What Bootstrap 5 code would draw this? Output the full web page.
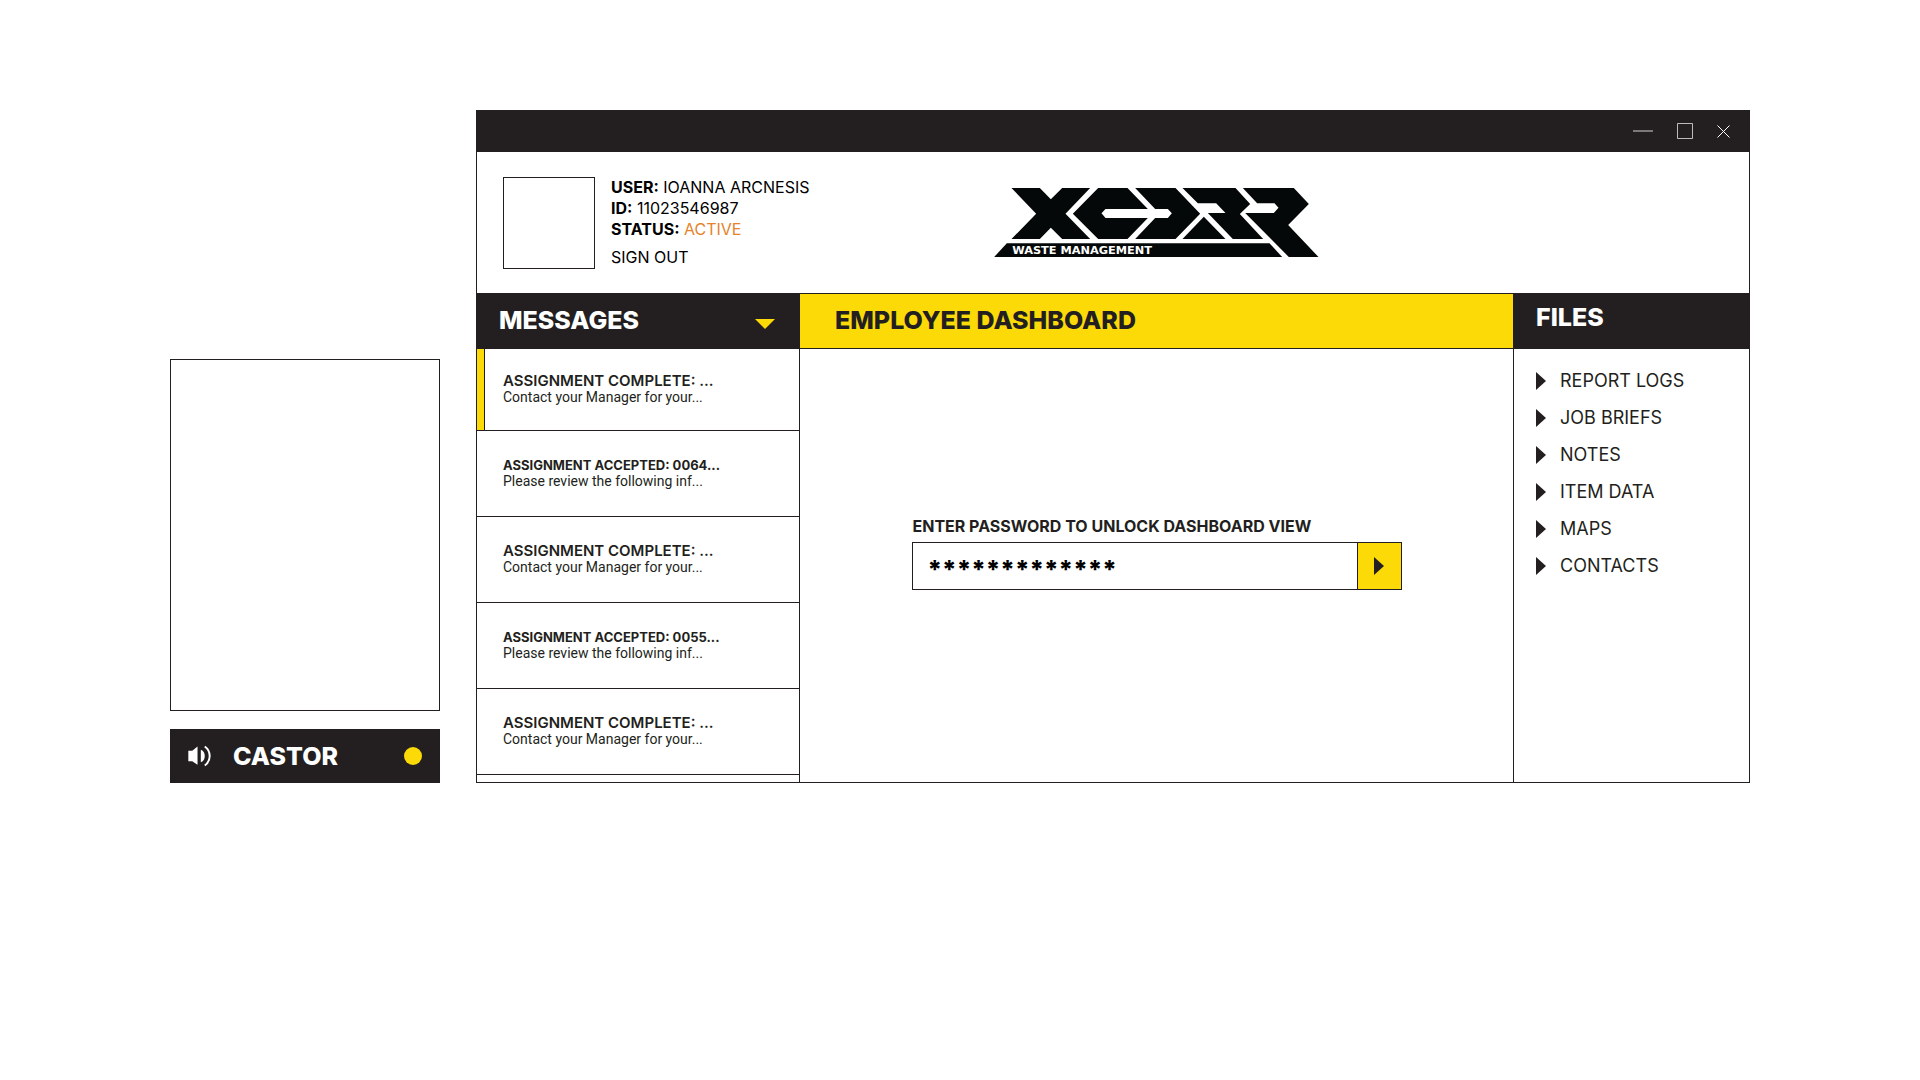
<!DOCTYPE html>
<html lang="en">
<head>
<meta charset="utf-8">
<meta name="viewport" content="width=device-width, initial-scale=1">
<title>XCDRR Waste Management – Employee Dashboard</title>
<link href="https://cdn.jsdelivr.net/npm/bootstrap@5.3.0/dist/css/bootstrap.min.css" rel="stylesheet">
<style>
  :root { --ink: #231f20; --sun: #fcda08; --amber: #e5822b; }
  body { font-family: Inter, "Liberation Sans", sans-serif; color: var(--ink); background: #fff; }
  a, a:hover { color: inherit; text-decoration: none; }
  button { color: inherit; }

  .desk { max-width: 1580px; padding-top: 110px; gap: 36px; }

  /* caller panel */
  .caller { flex: 0 0 270px; gap: 18px; }
  .caller-view { height: 352px; border: 1px solid var(--ink); }
  .caller-bar { height: 54px; padding: 0 18px; background: var(--ink); }
  .caller-name { margin-left: 22px; }
  .live-dot { width: 18px; height: 18px; background: var(--sun); }
  .heading { font-size: 25px; line-height: 32px; font-weight: 800; }

  /* application window */
  .app { border: 1px solid var(--ink); min-width: 0; }
  .titlebar { height: 41px; padding-right: 19px; padding-bottom: 1px; gap: 24px; background: var(--ink); color: #fff; }
  .account { height: 141px; }
  .col-side { flex: 0 0 323px; min-width: 0; }
  .col-files { flex: 0 0 236px; }
  .avatar { width: 92px; height: 92px; border: 1px solid var(--ink); }
  .profile { padding-left: 26px; gap: 16px; color: #000; font-size: 16px; line-height: 21px; white-space: nowrap; }
  .status-on { color: var(--amber); }
  .signout { margin-top: 7px; }

  .pane-head { height: 56px; padding-left: 22px; padding-bottom: 2px; border-top: 1px solid var(--ink); border-bottom: 1px solid var(--ink); }
  .pane-dark { background: var(--ink); color: #fff; }
  .pane-sun { background: var(--sun); padding-left: 35px; }
  .pane-raised { padding-bottom: 8px; }
  .toggle { padding-right: 25px; }

  .rule-end { border-right: 1px solid var(--ink); }
  .rule-start { border-left: 1px solid var(--ink); }

  .message { height: 86px; padding-left: 26px; border-bottom: 1px solid var(--ink); line-height: 16px; }
  .message-open { height: 82px; padding-left: 0; }
  .message-open::before { content: ""; width: 8px; align-self: stretch; margin-right: 18px; background: var(--sun); border-right: 1px solid var(--ink); }
  .message-peek { height: 7px; }
  .subject { font-size: 15px; font-weight: 600; }
  .subject-long { font-size: 13px; font-weight: 700; }
  .preview { font: 400 14px/17px Roboto, sans-serif; }

  .unlock { width: 490px; padding-bottom: 28px; }
  .unlock-label { font-size: 16px; line-height: 24px; font-weight: 700; padding-left: 1px; }
  .unlock-row { height: 48px; border: 1px solid var(--ink); }
  .unlock-input { border: 0; border-radius: 0; color: #000; font-size: 25px; font-weight: 800; padding: 8px 15px 0; }
  .unlock-input:focus { box-shadow: none; }
  .unlock-go { flex: 0 0 44px; background: var(--sun); border: 0; border-left: 1px solid var(--ink); }

  .files { padding: 13px 0 0 22px; font-size: 18px; line-height: 37px; }
  .files a { gap: 14px; }
</style>
<script src="https://cdn.jsdelivr.net/npm/bootstrap@5.3.0/dist/js/bootstrap.bundle.min.js"></script>
</head>
<body>
<div class="desk mx-auto d-flex align-items-end">

  <aside class="caller d-flex flex-column">
    <div class="caller-view"></div>
    <div class="caller-bar d-flex align-items-center text-white">
      <svg width="23" height="22" viewBox="0 0 70 66" aria-hidden="true">
        <path fill="#fff" d="M1 17h12L29 4v56L13 49H1zM39 14c9 3 12 10 12 19s-3 16-12 19z"/>
        <path fill="none" stroke="#fff" stroke-width="6" d="M51 4c20 14 20 44 0 58"/>
      </svg>
      <h2 class="caller-name heading mb-0">CASTOR</h2>
      <span class="live-dot rounded-circle ms-auto"></span>
    </div>
  </aside>

  <main class="app flex-grow-1">
    <div class="titlebar d-flex align-items-center justify-content-end">
      <button type="button" class="btn p-0 border-0 d-flex" aria-label="Minimize">
        <svg width="20" height="16" viewBox="0 0 20 16"><path fill="none" stroke="#fff" stroke-opacity=".4" stroke-width="2" d="M0 8h20"/></svg>
      </button>
      <button type="button" class="btn p-0 border-0 d-flex" aria-label="Maximize">
        <svg width="16" height="16" viewBox="0 0 16 16"><path fill="none" stroke="#fff" stroke-opacity=".7" d="M.5.5h15v15H.5z"/></svg>
      </button>
      <button type="button" class="btn p-0 border-0 d-flex" aria-label="Close">
        <svg width="13" height="13" viewBox="0 0 13 13"><path fill="none" stroke="#fff" d="M.5.5l12 12M12.500.5l-12 12"/></svg>
      </button>
    </div>

    <header class="account d-flex align-items-center">
      <div class="col-side profile d-flex align-items-center">
        <div class="avatar flex-shrink-0"></div>
        <div>
          <div><strong>USER:</strong> IOANNA ARCNESIS</div>
          <div><strong>ID:</strong> 11023546987</div>
          <div><strong>STATUS:</strong> <span class="status-on">ACTIVE</span></div>
          <div class="signout"><a href="#">SIGN OUT</a></div>
        </div>
      </div>
      <div class="flex-grow-1 d-flex justify-content-center">
        <svg width="325" height="69" viewBox="44 38 974 207" role="img" aria-label="XCDRR Waste Management">
          <g fill="#040808">
            <path d="M96 38h85l33 34 34-34h84l-74 77 74 76h-84l-34-34-33 34H96l74-76z"/>
            <path d="M356 38h88l61 63H378l-12 13 12 14h127l-61 63h-88l-76-76z"/>
            <path d="M467 38h121l74 77-74 76H467l60-63h38l12-14-12-13h-38z"/>
            <path d="M609 38h159l44 48-31 30 70 75h-91l-75-78h53l-28-29h-55z"/>
            <path d="M609 191l64-67 65 67z"/>
            <path d="M790 38h153l45 48-62 63 91 96h-89L797 113h86l14-16-12-13h-52z"/>
            <path d="M82 204h788l38 41H44z"/>
          </g>
          <text x="98" y="236" fill="#fff" font-family="DejaVu Sans, sans-serif" font-weight="700" font-size="34">WASTE MANAGEMENT</text>
        </svg>
      </div>
      <div class="col-files"></div>
    </header>

    <div class="d-flex">
      <section class="col-side">
        <div class="pane-head pane-dark d-flex align-items-center">
          <h2 class="heading mb-0">MESSAGES</h2>
          <button type="button" class="toggle btn border-0 ms-auto pt-3 pb-2 ps-2 d-flex" aria-label="Collapse messages">
            <svg width="20" height="10" viewBox="0 0 20 10"><path fill="#fcda08" d="M0 0h20L10 10z"/></svg>
          </button>
        </div>
        <ul class="list-unstyled mb-0 rule-end">
          <li class="message message-open d-flex align-items-center"><a href="#"><span class="subject d-block">ASSIGNMENT COMPLETE: ...</span><span class="preview d-block">Contact your Manager for your...</span></a></li>
          <li class="message d-flex align-items-center"><a href="#"><span class="subject subject-long d-block">ASSIGNMENT ACCEPTED: 0064...</span><span class="preview d-block">Please review the following inf...</span></a></li>
          <li class="message d-flex align-items-center"><a href="#"><span class="subject d-block">ASSIGNMENT COMPLETE: ...</span><span class="preview d-block">Contact your Manager for your...</span></a></li>
          <li class="message d-flex align-items-center"><a href="#"><span class="subject subject-long d-block">ASSIGNMENT ACCEPTED: 0055...</span><span class="preview d-block">Please review the following inf...</span></a></li>
          <li class="message d-flex align-items-center"><a href="#"><span class="subject d-block">ASSIGNMENT COMPLETE: ...</span><span class="preview d-block">Contact your Manager for your...</span></a></li>
          <li class="message-peek"></li>
        </ul>
      </section>

      <section class="flex-grow-1 d-flex flex-column">
        <div class="pane-head pane-sun d-flex align-items-center">
          <h1 class="heading mb-0">EMPLOYEE DASHBOARD</h1>
        </div>
        <div class="flex-grow-1 d-flex align-items-center justify-content-center">
          <form class="unlock">
            <label class="unlock-label d-block mb-1" for="pass">ENTER PASSWORD TO UNLOCK DASHBOARD VIEW</label>
            <div class="unlock-row d-flex">
              <input class="unlock-input form-control" id="pass" type="text" autocomplete="off" value="*************">
              <button type="button" class="unlock-go d-flex align-items-center justify-content-center" aria-label="Unlock">
                <svg width="10" height="18" viewBox="0 0 10 18"><path fill="#231f20" d="M0 0l10 9-10 9z"/></svg>
              </button>
            </div>
          </form>
        </div>
      </section>

      <section class="col-files rule-start">
        <div class="pane-head pane-dark pane-raised d-flex align-items-center">
          <h2 class="heading mb-0">FILES</h2>
        </div>
        <ul class="files list-unstyled mb-0">
          <li><a class="d-flex align-items-center" href="#"><svg width="10" height="18" viewBox="0 0 10 18"><path fill="#231f20" d="M0 0l10 9-10 9z"/></svg>REPORT LOGS</a></li>
          <li><a class="d-flex align-items-center" href="#"><svg width="10" height="18" viewBox="0 0 10 18"><path fill="#231f20" d="M0 0l10 9-10 9z"/></svg>JOB BRIEFS</a></li>
          <li><a class="d-flex align-items-center" href="#"><svg width="10" height="18" viewBox="0 0 10 18"><path fill="#231f20" d="M0 0l10 9-10 9z"/></svg>NOTES</a></li>
          <li><a class="d-flex align-items-center" href="#"><svg width="10" height="18" viewBox="0 0 10 18"><path fill="#231f20" d="M0 0l10 9-10 9z"/></svg>ITEM DATA</a></li>
          <li><a class="d-flex align-items-center" href="#"><svg width="10" height="18" viewBox="0 0 10 18"><path fill="#231f20" d="M0 0l10 9-10 9z"/></svg>MAPS</a></li>
          <li><a class="d-flex align-items-center" href="#"><svg width="10" height="18" viewBox="0 0 10 18"><path fill="#231f20" d="M0 0l10 9-10 9z"/></svg>CONTACTS</a></li>
        </ul>
      </section>
    </div>
  </main>
</div>
</body>
</html>
